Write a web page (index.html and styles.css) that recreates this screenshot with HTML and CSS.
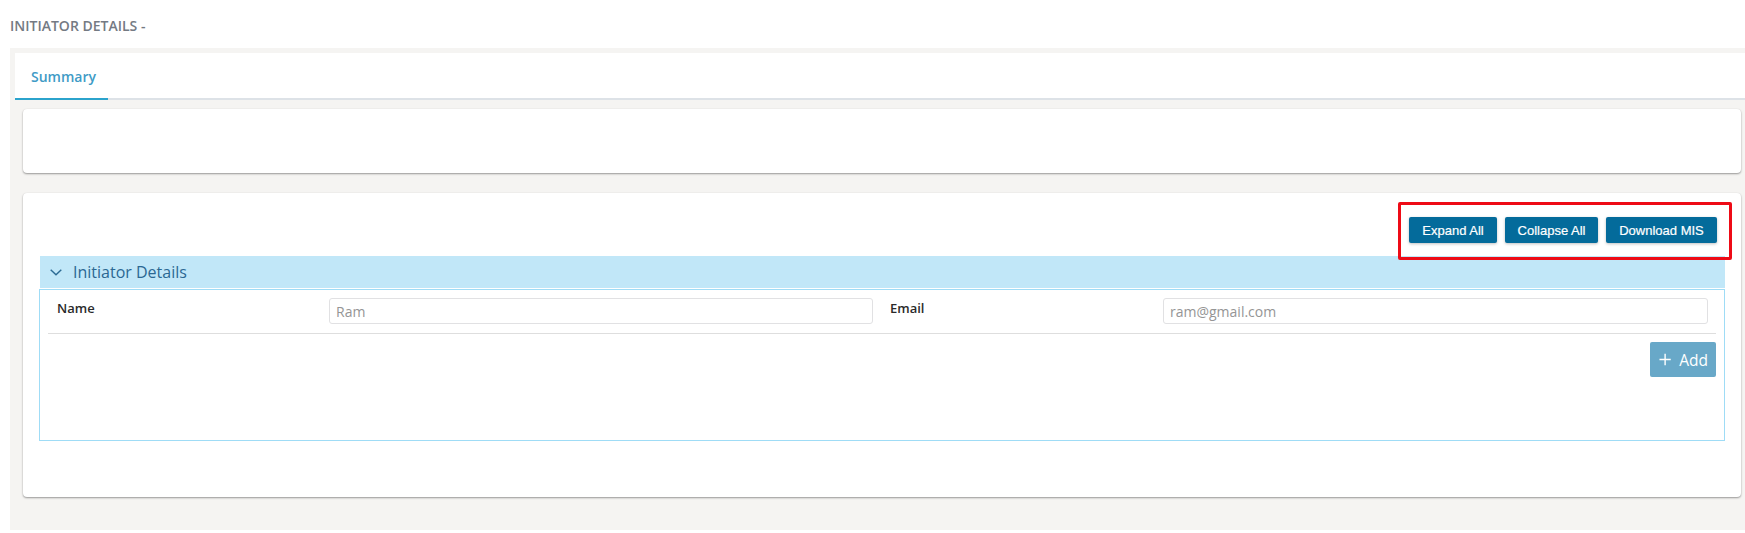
FILE: index.html
```html
<!DOCTYPE html>
<html lang="en">
<head>
<meta charset="utf-8">
<title>Initiator Details</title>
<link rel="stylesheet" href="styles.css">
</head>
<body>
  <h1 class="page-title">INITIATOR DETAILS -</h1>
  <div class="shell">
    <div class="tabs">
      <div class="tab tab-active">Summary</div>
    </div>
    <div class="tab-content">
      <div class="card card-empty"></div>
      <div class="card card-main">
        <div class="toolbar">
          <div class="toolbar-buttons">
            <button class="btn-primary btn-expand">Expand All</button>
            <button class="btn-primary btn-collapse">Collapse All</button>
            <button class="btn-primary btn-download">Download MIS</button>
            <span class="highlight"></span>
          </div>
        </div>
        <div class="accordion">
          <div class="acc-header">
            <svg class="chevron" width="12" height="7" viewBox="0 0 12 7"><polyline points="0.7,0.7 6,5.8 11.3,0.7" fill="none" stroke="#2c6b94" stroke-width="1.4"/></svg>
            <span class="acc-title">Initiator Details</span>
          </div>
          <div class="acc-body">
            <div class="field-row">
              <label class="field-label label-name">Name</label>
              <input class="field-input input-name" type="text" placeholder="Ram">
              <label class="field-label label-email">Email</label>
              <input class="field-input input-email" type="text" placeholder="ram@gmail.com">
            </div>
            <div class="add-row">
              <button class="btn-add">
                <svg width="13" height="13" viewBox="0 0 13 13"><path d="M6.5 0.5v12M0.5 6.5h12" stroke="#fff" stroke-width="1.5" fill="none"/></svg>
                <span>Add</span>
              </button>
            </div>
          </div>
        </div>
      </div>
    </div>
  </div>
</body>
</html>
```
FILE: styles.css
```css
* { box-sizing: border-box; }
html, body { margin: 0; padding: 0; background: #ffffff; }
body { font-family: "Open Sans", "Noto Sans", sans-serif; color: #222; }

.page-title {
  margin: 0;
  padding: 16px 10px 12px;
  font-size: 14px;
  line-height: 20px;
  font-weight: 600;
  color: #747a83;
}

.shell {
  margin-left: 10px;
  background: #f5f4f2;
  padding: 5px 0 33px 5px;
}

.tabs {
  display: flex;
  background: #ffffff;
  border-bottom: 2px solid #dde2e7;
  height: 47px;
}
.tab {
  padding: 14px 16px 11px;
  line-height: 20px;
  font-size: 14px;
  font-weight: 600;
  color: #3f9bc6;
  width: 93px;
}
.tab-active {
  border-bottom: 2px solid #2ba3cc;
  margin-bottom: -2px;
}

.tab-content {
  padding: 9px 4px 0 8px;
}

.card {
  background: #ffffff;
  border-radius: 4px;
  box-shadow: 0 1px 2px rgba(0, 0, 0, 0.38), 0 0 1px rgba(0, 0, 0, 0.08);
}
.card-empty { height: 64px; margin-bottom: 20px; }
.card-main { padding: 24px 16px 56px 16px; }

.toolbar {
  display: flex;
  justify-content: flex-end;
  padding-right: 8px;
  margin-bottom: 13px;
}
.toolbar-buttons {
  position: relative;
  display: flex;
  gap: 8px;
}
.btn-primary {
  height: 26px;
  border: none;
  border-radius: 2px;
  background: #046b9b;
  color: #ffffff;
  font-family: "Liberation Sans", Arial, sans-serif;
  font-size: 13px;
  white-space: nowrap;
  padding: 0;
  text-align: center;
  box-shadow: 0 1px 3px rgba(0, 0, 0, 0.25);
  -webkit-text-stroke: 0.2px #ffffff;
}
.btn-expand { width: 88px; }
.btn-collapse { width: 93px; }
.btn-download { width: 111px; }

.highlight {
  position: absolute;
  top: -15px;
  left: -11px;
  right: -15px;
  bottom: -17px;
  border: 3px solid #ee0b16;
  border-radius: 2px;
  pointer-events: none;
}

.acc-header {
  display: flex;
  align-items: center;
  height: 32px;
  background: #c1e7f8;
  padding-left: 10px;
  margin-left: 1px;
}
.chevron { margin-right: 11px; margin-top: 1px; }
.acc-title {
  font-size: 16px;
  color: #2b6893;
  line-height: 20px;
}

.acc-body {
  margin-top: 1px;
  border: 1px solid #9fdcf6;
  padding: 0 8px;
}

.field-row {
  display: flex;
  align-items: flex-start;
  padding: 8px 0 9px 9px;
  border-bottom: 1px solid #dedede;
}
.field-label {
  font-size: 13px;
  font-weight: 600;
  line-height: 20px;
  color: #2a2a2a;
}
.label-name { width: 272px; }
.label-email { width: 273px; margin-left: 17px; }
.field-input {
  height: 26px;
  border: 1px solid #e1e1e3;
  border-radius: 3px;
  padding: 0 6px;
  font-family: "Open Sans", "Noto Sans", sans-serif;
  font-size: 14px;
  color: #333;
  background: #fff;
  outline: none;
}
.field-input::placeholder { color: #959595; }
.input-name { width: 544px; }
.input-email { width: 545px; }

.add-row {
  display: flex;
  justify-content: flex-end;
  padding: 8px 0 63px;
}
.btn-add {
  display: flex;
  align-items: center;
  gap: 8px;
  width: 66px;
  height: 35px;
  border: none;
  border-radius: 2px;
  background: #68a8c8;
  color: #ffffff;
  font-family: "Open Sans", "Noto Sans", sans-serif;
  font-size: 15.5px;
  padding: 0 8px 0 9px;
}
```
